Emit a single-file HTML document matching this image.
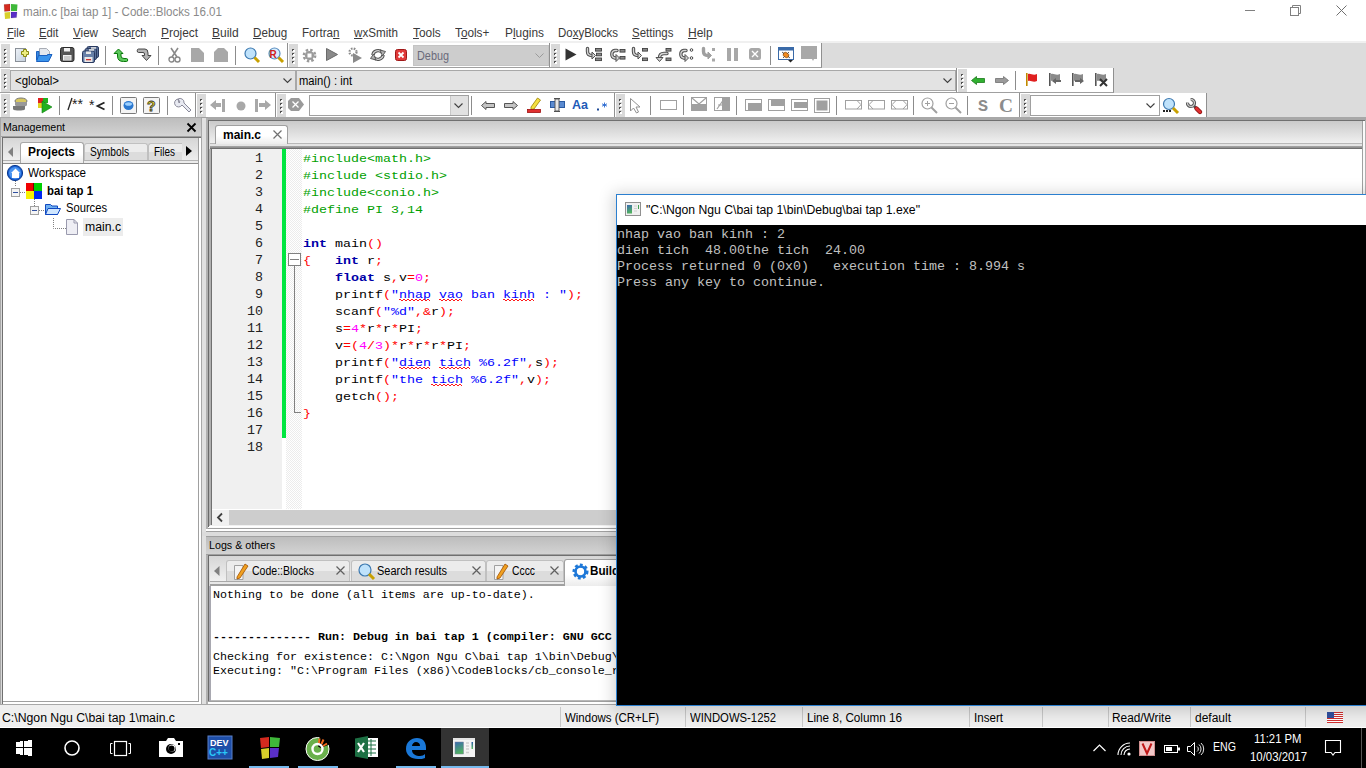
<!DOCTYPE html>
<html><head><meta charset="utf-8"><title>Code::Blocks</title>
<style>
*{margin:0;padding:0;box-sizing:border-box}
html,body{width:1366px;height:768px;overflow:hidden;background:#fff}
body{font-family:"Liberation Sans",sans-serif;font-size:12px;color:#000;position:relative}
.a{position:absolute}
.t{position:absolute;line-height:0;white-space:pre}
svg{overflow:visible}
</style></head><body>
<div class="a" style="left:0px;top:0px;width:1366px;height:22px;background:#fff"></div>
<svg class="a" style="left:3px;top:3px;" width="15" height="16" viewBox="0 0 15 16"><path d="M1 1.5L7 1V8L1.5 8.5Z" fill="#d42a1f"/><path d="M8 1L14.5 1.5L14 8H8Z" fill="#3fb83a"/><path d="M1.5 9.5L7 9V15.5L2 16Z" fill="#d8cf2a"/><path d="M8 9H14L13.5 14.5L8 15Z" fill="#5a2fc8"/><path d="M1 1.5L7 1V8L1.5 8.5Z M8 9H14L13.5 14.5L8 15Z" fill="none" stroke="#00000033" stroke-width="0.6"/></svg>
<div class="t" style="left:23px;top:11.84px;font-size:12px;color:#8a8a8a;transform:scale(0.9655,1.0000);transform-origin:0 4.16px;">main.c [bai tap 1] - Code::Blocks 16.01</div>
<div class="a" style="left:1245px;top:10px;width:10px;height:1px;background:#808080"></div>
<svg class="a" style="left:1290px;top:5px;" width="11" height="11" viewBox="0 0 11 11"><path d="M2.5 2.5V0.5H10.5V8.5H8.5" fill="none" stroke="#808080"/><rect x="0.5" y="2.5" width="8" height="8" fill="none" stroke="#808080"/></svg>
<svg class="a" style="left:1336px;top:5px;" width="11" height="11" viewBox="0 0 11 11"><path d="M0.5 0.5L10.5 10.5M10.5 0.5L0.5 10.5" stroke="#707070" stroke-width="1"/></svg>
<div class="a" style="left:0px;top:22px;width:1366px;height:19px;background:#fff"></div>
<div class="t" style="left:7px;top:32.84px;font-size:12px;color:#3a3a3a;transform:scale(0.9298,1.0000);transform-origin:0 4.16px;"><u>F</u>ile</div>
<div class="t" style="left:39px;top:32.84px;font-size:12px;color:#3a3a3a;transform:scale(0.9371,1.0000);transform-origin:0 4.16px;"><u>E</u>dit</div>
<div class="t" style="left:73px;top:32.84px;font-size:12px;color:#3a3a3a;transform:scale(0.9685,1.0000);transform-origin:0 4.16px;"><u>V</u>iew</div>
<div class="t" style="left:112px;top:32.84px;font-size:12px;color:#3a3a3a;transform:scale(0.9041,1.0000);transform-origin:0 4.16px;">Sea<u>r</u>ch</div>
<div class="t" style="left:161px;top:32.84px;font-size:12px;color:#3a3a3a;transform:scale(0.9904,1.0000);transform-origin:0 4.16px;"><u>P</u>roject</div>
<div class="t" style="left:212px;top:32.84px;font-size:12px;color:#3a3a3a;"><u>B</u>uild</div>
<div class="t" style="left:253px;top:32.84px;font-size:12px;color:#3a3a3a;transform:scale(0.9696,1.0000);transform-origin:0 4.16px;"><u>D</u>ebug</div>
<div class="t" style="left:302px;top:32.84px;font-size:12px;color:#3a3a3a;transform:scale(0.9689,1.0000);transform-origin:0 4.16px;">Fortra<u>n</u></div>
<div class="t" style="left:354px;top:32.84px;font-size:12px;color:#3a3a3a;transform:scale(0.9700,1.0000);transform-origin:0 4.16px;"><u>w</u>xSmith</div>
<div class="t" style="left:413px;top:32.84px;font-size:12px;color:#3a3a3a;transform:scale(0.9887,1.0000);transform-origin:0 4.16px;"><u>T</u>ools</div>
<div class="t" style="left:455px;top:32.84px;font-size:12px;color:#3a3a3a;transform:scale(0.9815,1.0000);transform-origin:0 4.16px;">T<u>o</u>ols+</div>
<div class="t" style="left:505px;top:32.84px;font-size:12px;color:#3a3a3a;transform:scale(0.9905,1.0000);transform-origin:0 4.16px;">P<u>l</u>ugins</div>
<div class="t" style="left:558px;top:32.84px;font-size:12px;color:#3a3a3a;transform:scale(0.9571,1.0000);transform-origin:0 4.16px;">Do<u>x</u>yBlocks</div>
<div class="t" style="left:632px;top:32.84px;font-size:12px;color:#3a3a3a;transform:scale(0.9545,1.0000);transform-origin:0 4.16px;"><u>S</u>ettings</div>
<div class="t" style="left:688px;top:32.84px;font-size:12px;color:#3a3a3a;"><u>H</u>elp</div>
<div class="a" style="left:0px;top:41px;width:1366px;height:2px;background:#f0f0f0"></div>
<div class="a" style="left:0px;top:43px;width:1366px;height:75px;background:#dcdcdc"></div>
<div class="a" style="left:0px;top:117px;width:1366px;height:1px;background:#a0a0a0"></div>
<div class="a" style="left:0px;top:43px;width:288px;height:25px;background:#fff;border-right:1px solid #909090;border-bottom:1px solid #a0a0a0"></div>
<div class="a" style="left:1px;top:44px;width:9px;height:23px;background:#d9d9d9"></div>
<svg class="a" style="left:1px;top:44px;" width="9" height="23" viewBox="0 0 9 23"><rect x="4" y="6" width="2" height="2" fill="#fff"/><rect x="3" y="5" width="2" height="1" fill="#505050"/><rect x="3" y="6" width="1" height="1" fill="#505050"/><rect x="4" y="10" width="2" height="2" fill="#fff"/><rect x="3" y="9" width="2" height="1" fill="#505050"/><rect x="3" y="10" width="1" height="1" fill="#505050"/><rect x="4" y="14" width="2" height="2" fill="#fff"/><rect x="3" y="13" width="2" height="1" fill="#505050"/><rect x="3" y="14" width="1" height="1" fill="#505050"/><rect x="4" y="18" width="2" height="2" fill="#fff"/><rect x="3" y="17" width="2" height="1" fill="#505050"/><rect x="3" y="18" width="1" height="1" fill="#505050"/></svg>
<div class="a" style="left:288px;top:43px;width:262px;height:25px;background:#fff;border-right:1px solid #909090;border-bottom:1px solid #a0a0a0"></div>
<div class="a" style="left:289px;top:44px;width:9px;height:23px;background:#d9d9d9"></div>
<svg class="a" style="left:289px;top:44px;" width="9" height="23" viewBox="0 0 9 23"><rect x="4" y="6" width="2" height="2" fill="#fff"/><rect x="3" y="5" width="2" height="1" fill="#505050"/><rect x="3" y="6" width="1" height="1" fill="#505050"/><rect x="4" y="10" width="2" height="2" fill="#fff"/><rect x="3" y="9" width="2" height="1" fill="#505050"/><rect x="3" y="10" width="1" height="1" fill="#505050"/><rect x="4" y="14" width="2" height="2" fill="#fff"/><rect x="3" y="13" width="2" height="1" fill="#505050"/><rect x="3" y="14" width="1" height="1" fill="#505050"/><rect x="4" y="18" width="2" height="2" fill="#fff"/><rect x="3" y="17" width="2" height="1" fill="#505050"/><rect x="3" y="18" width="1" height="1" fill="#505050"/></svg>
<div class="a" style="left:550px;top:43px;width:272px;height:25px;background:#fff;border-right:1px solid #909090;border-bottom:1px solid #a0a0a0"></div>
<div class="a" style="left:551px;top:44px;width:9px;height:23px;background:#d9d9d9"></div>
<svg class="a" style="left:551px;top:44px;" width="9" height="23" viewBox="0 0 9 23"><rect x="4" y="6" width="2" height="2" fill="#fff"/><rect x="3" y="5" width="2" height="1" fill="#505050"/><rect x="3" y="6" width="1" height="1" fill="#505050"/><rect x="4" y="10" width="2" height="2" fill="#fff"/><rect x="3" y="9" width="2" height="1" fill="#505050"/><rect x="3" y="10" width="1" height="1" fill="#505050"/><rect x="4" y="14" width="2" height="2" fill="#fff"/><rect x="3" y="13" width="2" height="1" fill="#505050"/><rect x="3" y="14" width="1" height="1" fill="#505050"/><rect x="4" y="18" width="2" height="2" fill="#fff"/><rect x="3" y="17" width="2" height="1" fill="#505050"/><rect x="3" y="18" width="1" height="1" fill="#505050"/></svg>
<div class="a" style="left:0px;top:68px;width:957px;height:25px;background:#fff;border-right:1px solid #909090;border-bottom:1px solid #a0a0a0"></div>
<div class="a" style="left:1px;top:69px;width:9px;height:23px;background:#d9d9d9"></div>
<svg class="a" style="left:1px;top:69px;" width="9" height="23" viewBox="0 0 9 23"><rect x="4" y="6" width="2" height="2" fill="#fff"/><rect x="3" y="5" width="2" height="1" fill="#505050"/><rect x="3" y="6" width="1" height="1" fill="#505050"/><rect x="4" y="10" width="2" height="2" fill="#fff"/><rect x="3" y="9" width="2" height="1" fill="#505050"/><rect x="3" y="10" width="1" height="1" fill="#505050"/><rect x="4" y="14" width="2" height="2" fill="#fff"/><rect x="3" y="13" width="2" height="1" fill="#505050"/><rect x="3" y="14" width="1" height="1" fill="#505050"/><rect x="4" y="18" width="2" height="2" fill="#fff"/><rect x="3" y="17" width="2" height="1" fill="#505050"/><rect x="3" y="18" width="1" height="1" fill="#505050"/></svg>
<div class="a" style="left:957px;top:68px;width:157px;height:25px;background:#fff;border-right:1px solid #909090;border-bottom:1px solid #a0a0a0"></div>
<div class="a" style="left:958px;top:69px;width:9px;height:23px;background:#d9d9d9"></div>
<svg class="a" style="left:958px;top:69px;" width="9" height="23" viewBox="0 0 9 23"><rect x="4" y="6" width="2" height="2" fill="#fff"/><rect x="3" y="5" width="2" height="1" fill="#505050"/><rect x="3" y="6" width="1" height="1" fill="#505050"/><rect x="4" y="10" width="2" height="2" fill="#fff"/><rect x="3" y="9" width="2" height="1" fill="#505050"/><rect x="3" y="10" width="1" height="1" fill="#505050"/><rect x="4" y="14" width="2" height="2" fill="#fff"/><rect x="3" y="13" width="2" height="1" fill="#505050"/><rect x="3" y="14" width="1" height="1" fill="#505050"/><rect x="4" y="18" width="2" height="2" fill="#fff"/><rect x="3" y="17" width="2" height="1" fill="#505050"/><rect x="3" y="18" width="1" height="1" fill="#505050"/></svg>
<div class="a" style="left:0px;top:93px;width:196px;height:25px;background:#fff;border-right:1px solid #909090;border-bottom:1px solid #a0a0a0"></div>
<div class="a" style="left:1px;top:94px;width:9px;height:23px;background:#d9d9d9"></div>
<svg class="a" style="left:1px;top:94px;" width="9" height="23" viewBox="0 0 9 23"><rect x="4" y="6" width="2" height="2" fill="#fff"/><rect x="3" y="5" width="2" height="1" fill="#505050"/><rect x="3" y="6" width="1" height="1" fill="#505050"/><rect x="4" y="10" width="2" height="2" fill="#fff"/><rect x="3" y="9" width="2" height="1" fill="#505050"/><rect x="3" y="10" width="1" height="1" fill="#505050"/><rect x="4" y="14" width="2" height="2" fill="#fff"/><rect x="3" y="13" width="2" height="1" fill="#505050"/><rect x="3" y="14" width="1" height="1" fill="#505050"/><rect x="4" y="18" width="2" height="2" fill="#fff"/><rect x="3" y="17" width="2" height="1" fill="#505050"/><rect x="3" y="18" width="1" height="1" fill="#505050"/></svg>
<div class="a" style="left:276px;top:93px;width:339px;height:25px;background:#fff;border-right:1px solid #909090;border-bottom:1px solid #a0a0a0"></div>
<div class="a" style="left:277px;top:94px;width:9px;height:23px;background:#d9d9d9"></div>
<svg class="a" style="left:277px;top:94px;" width="9" height="23" viewBox="0 0 9 23"><rect x="4" y="6" width="2" height="2" fill="#fff"/><rect x="3" y="5" width="2" height="1" fill="#505050"/><rect x="3" y="6" width="1" height="1" fill="#505050"/><rect x="4" y="10" width="2" height="2" fill="#fff"/><rect x="3" y="9" width="2" height="1" fill="#505050"/><rect x="3" y="10" width="1" height="1" fill="#505050"/><rect x="4" y="14" width="2" height="2" fill="#fff"/><rect x="3" y="13" width="2" height="1" fill="#505050"/><rect x="3" y="14" width="1" height="1" fill="#505050"/><rect x="4" y="18" width="2" height="2" fill="#fff"/><rect x="3" y="17" width="2" height="1" fill="#505050"/><rect x="3" y="18" width="1" height="1" fill="#505050"/></svg>
<div class="a" style="left:196px;top:93px;width:80px;height:25px;background:#fff;border-right:1px solid #909090;border-bottom:1px solid #a0a0a0"></div>
<div class="a" style="left:197px;top:94px;width:9px;height:23px;background:#d9d9d9"></div>
<svg class="a" style="left:197px;top:94px;" width="9" height="23" viewBox="0 0 9 23"><rect x="4" y="6" width="2" height="2" fill="#fff"/><rect x="3" y="5" width="2" height="1" fill="#505050"/><rect x="3" y="6" width="1" height="1" fill="#505050"/><rect x="4" y="10" width="2" height="2" fill="#fff"/><rect x="3" y="9" width="2" height="1" fill="#505050"/><rect x="3" y="10" width="1" height="1" fill="#505050"/><rect x="4" y="14" width="2" height="2" fill="#fff"/><rect x="3" y="13" width="2" height="1" fill="#505050"/><rect x="3" y="14" width="1" height="1" fill="#505050"/><rect x="4" y="18" width="2" height="2" fill="#fff"/><rect x="3" y="17" width="2" height="1" fill="#505050"/><rect x="3" y="18" width="1" height="1" fill="#505050"/></svg>
<div class="a" style="left:615px;top:93px;width:405px;height:25px;background:#fff;border-right:1px solid #909090;border-bottom:1px solid #a0a0a0"></div>
<div class="a" style="left:616px;top:94px;width:9px;height:23px;background:#d9d9d9"></div>
<svg class="a" style="left:616px;top:94px;" width="9" height="23" viewBox="0 0 9 23"><rect x="4" y="6" width="2" height="2" fill="#fff"/><rect x="3" y="5" width="2" height="1" fill="#505050"/><rect x="3" y="6" width="1" height="1" fill="#505050"/><rect x="4" y="10" width="2" height="2" fill="#fff"/><rect x="3" y="9" width="2" height="1" fill="#505050"/><rect x="3" y="10" width="1" height="1" fill="#505050"/><rect x="4" y="14" width="2" height="2" fill="#fff"/><rect x="3" y="13" width="2" height="1" fill="#505050"/><rect x="3" y="14" width="1" height="1" fill="#505050"/><rect x="4" y="18" width="2" height="2" fill="#fff"/><rect x="3" y="17" width="2" height="1" fill="#505050"/><rect x="3" y="18" width="1" height="1" fill="#505050"/></svg>
<div class="a" style="left:1020px;top:93px;width:187px;height:25px;background:#fff;border-right:1px solid #909090;border-bottom:1px solid #a0a0a0"></div>
<div class="a" style="left:1021px;top:94px;width:9px;height:23px;background:#d9d9d9"></div>
<svg class="a" style="left:1021px;top:94px;" width="9" height="23" viewBox="0 0 9 23"><rect x="4" y="6" width="2" height="2" fill="#fff"/><rect x="3" y="5" width="2" height="1" fill="#505050"/><rect x="3" y="6" width="1" height="1" fill="#505050"/><rect x="4" y="10" width="2" height="2" fill="#fff"/><rect x="3" y="9" width="2" height="1" fill="#505050"/><rect x="3" y="10" width="1" height="1" fill="#505050"/><rect x="4" y="14" width="2" height="2" fill="#fff"/><rect x="3" y="13" width="2" height="1" fill="#505050"/><rect x="3" y="14" width="1" height="1" fill="#505050"/><rect x="4" y="18" width="2" height="2" fill="#fff"/><rect x="3" y="17" width="2" height="1" fill="#505050"/><rect x="3" y="18" width="1" height="1" fill="#505050"/></svg>
<svg class="a" style="left:13px;top:47px;" width="17" height="16" viewBox="0 0 17 16"><defs><linearGradient id="gdoc" x1="0" y1="0" x2="1" y2="1"><stop offset="0" stop-color="#eef2f8"/><stop offset="1" stop-color="#c4d0dc"/></linearGradient></defs><rect x="2.5" y="1.5" width="10" height="13" fill="url(#gdoc)" stroke="#8a9098"/><path d="M10.5 2.5H13.5V4.5H15.5V7.5H13.5V9.5H10.5V7.5H8.5V4.5H10.5Z" fill="#eeee80" stroke="#8a8a10"/></svg>
<svg class="a" style="left:36px;top:47px;" width="17" height="16" viewBox="0 0 17 16"><path d="M3.5 1.5H10.5L13.5 4.5V12H3.5Z" fill="#e4e8ee" stroke="#a8acb4"/><path d="M0.5 4.5H3V13H0.5Z" fill="#3a8ae0" stroke="#1a60c0"/><path d="M2.5 8.5H11.5V7.5H16L12.5 14.5H0.5Z" fill="#3a94ec" stroke="#1a60c0"/></svg>
<svg class="a" style="left:60px;top:47px;" width="15" height="15" viewBox="0 0 15 15"><rect x="0.5" y="0.5" width="13.5" height="14" rx="2" fill="#555" stroke="#2a2a2a"/><rect x="4" y="1" width="6" height="3.5" fill="#f0f0f0"/><rect x="3" y="8" width="8.5" height="5.5" fill="#f0f0f0"/><path d="M4 10H10.5M4 12H10.5" stroke="#888" stroke-width="0.7"/></svg>
<svg class="a" style="left:82px;top:46px;" width="17" height="17" viewBox="0 0 17 17"><rect x="5" y="0.5" width="11.5" height="11" rx="1.5" fill="#5a7098" stroke="#2a3a60"/><rect x="3" y="2.5" width="11.5" height="11" rx="1.5" fill="#5a7098" stroke="#2a3a60"/><rect x="0.5" y="5" width="12" height="11.5" rx="1.5" fill="#6880a8" stroke="#2a3a60"/><rect x="9" y="1.2" width="5" height="1.5" fill="#e8e8e8"/><rect x="7" y="3.2" width="5" height="1.5" fill="#e8e8e8"/><rect x="4" y="5.5" width="5" height="2.5" fill="#e8e8e8"/><rect x="2.5" y="11" width="8" height="5" fill="#e8e8e8"/><rect x="4" y="13" width="5" height="1.3" fill="#d03030"/></svg>
<div class="a" style="left:105px;top:46px;width:1px;height:19px;background:#8c8c8c"></div>
<svg class="a" style="left:112px;top:47px;" width="17" height="16" viewBox="0 0 17 16"><path d="M6.5 2L11 6.5H9V9Q9 11.5 12 11.5H14.5Q15.7 11.5 15.7 13Q15.7 14.5 14.5 14.5H11.5Q5.5 14.5 5.5 9V6.5H2Z" fill="#5cc85c" stroke="#0a7a0a" stroke-width="1" stroke-linejoin="round"/></svg>
<svg class="a" style="left:137px;top:47px;" width="16" height="16" viewBox="0 0 16 16"><path d="M1.5 2H8Q11 2 11 6V8.5H14L9.5 13.5L5 8.5H7.5V7Q7.5 5.5 6 5.5H1.5Q0.2 5.5 0.2 3.75Q0.2 2 1.5 2Z" fill="#b4b4b4" stroke="#383838" stroke-width="0.9" stroke-linejoin="round"/></svg>
<div class="a" style="left:158px;top:46px;width:1px;height:19px;background:#8c8c8c"></div>
<svg class="a" style="left:168px;top:47px;" width="13" height="16" viewBox="0 0 13 16"><path d="M3 1L9 10M10 1L4 10" stroke="#8a8a8a" stroke-width="1.6"/><circle cx="3.5" cy="12.5" r="2.5" fill="none" stroke="#8a8a8a" stroke-width="1.4"/><circle cx="9.5" cy="12.5" r="2.5" fill="none" stroke="#8a8a8a" stroke-width="1.4"/></svg>
<svg class="a" style="left:191px;top:48px;" width="14" height="14" viewBox="0 0 14 14"><path d="M0 0H8L13 5V14H0Z" fill="#a8a8a8"/></svg>
<svg class="a" style="left:214px;top:48px;" width="14" height="14" viewBox="0 0 14 14"><path d="M0 4L4 0H10L14 4V14H0Z" fill="#a8a8a8"/></svg>
<div class="a" style="left:235px;top:46px;width:1px;height:19px;background:#8c8c8c"></div>
<svg class="a" style="left:244px;top:47px;" width="16" height="16" viewBox="0 0 16 16"><circle cx="6.5" cy="6.5" r="5.5" fill="#bfe2fb" stroke="#3d79b0" stroke-width="1.2"/><path d="M10.5 10.5L15 15" stroke="#c8a000" stroke-width="3"/></svg>
<svg class="a" style="left:268px;top:47px;" width="16" height="16" viewBox="0 0 16 16"><circle cx="6.5" cy="6.5" r="5.5" fill="#d8eefc" stroke="#5a8dc0" stroke-width="1.2"/><text x="1.5" y="11" font-family="Liberation Sans" font-weight="bold" font-size="10" fill="#d02020">R</text><path d="M10.5 10.5L15 15" stroke="#c8a000" stroke-width="3"/></svg>
<svg class="a" style="left:302px;top:48px;" width="15" height="15" viewBox="0 0 15 15"><circle cx="7.5" cy="7.5" r="5.6" fill="none" stroke="#9a9a9a" stroke-width="2.6" stroke-dasharray="2.4 2"/><circle cx="7.5" cy="7.5" r="4.6" fill="#9a9a9a"/><rect x="5.5" y="5.5" width="4" height="4" fill="#fff"/></svg>
<svg class="a" style="left:326px;top:48px;" width="12" height="13" viewBox="0 0 12 13"><path d="M0.5 0.5L11.5 6.5L0.5 12.5Z" fill="#8a8a8a" stroke="#6a6a6a"/></svg>
<svg class="a" style="left:348px;top:47px;" width="15" height="16" viewBox="0 0 15 16"><circle cx="5" cy="5" r="3.5" fill="none" stroke="#8a8a8a" stroke-width="2.2" stroke-dasharray="1.6 1.2"/><path d="M5 6L14 11L5 16Z" fill="#8a8a8a"/></svg>
<svg class="a" style="left:370px;top:48px;" width="16" height="14" viewBox="0 0 16 14"><path d="M3 7A5 4.5 0 0 1 12 4.5" fill="none" stroke="#505050" stroke-width="3.4"/><path d="M3 7A5 4.5 0 0 1 12 4.5" fill="none" stroke="#d0d0d0" stroke-width="1.3"/><path d="M13 7A5 4.5 0 0 1 4 9.5" fill="none" stroke="#505050" stroke-width="3.4"/><path d="M13 7A5 4.5 0 0 1 4 9.5" fill="none" stroke="#d0d0d0" stroke-width="1.3"/><path d="M10 2L15.5 3.5L12.5 8Z M6 12L0.5 10.5L3.5 6Z" fill="#b0b0b0" stroke="#505050" stroke-width="0.9"/></svg>
<svg class="a" style="left:395px;top:49px;" width="12" height="12" viewBox="0 0 12 12"><rect x="0.5" y="0.5" width="11" height="11" rx="2" fill="#e03a3a" stroke="#a01818"/><path d="M3.5 3.5L8.5 8.5M8.5 3.5L3.5 8.5" stroke="#fff" stroke-width="1.8"/></svg>
<div class="a" style="left:413px;top:45px;width:136px;height:21px;background:#cdcdcd;border:1px solid #c4c4c4"></div>
<div class="t" style="left:417px;top:55.84px;font-size:12px;color:#6a6a7a;transform:scale(0.9046,1.0000);transform-origin:0 4.16px;">Debug</div>
<svg class="a" style="left:535px;top:53px;" width="9" height="5" viewBox="0 0 9 5"><path d="M0.5 0.5L4.5 4.5L8.5 0.5" fill="none" stroke="#9a9a9a"/></svg>
<svg class="a" style="left:565px;top:48px;" width="12" height="13" viewBox="0 0 12 13"><path d="M0.5 0.5L11.5 6.5L0.5 12.5Z" fill="#333"/></svg>
<svg class="a" style="left:586px;top:47px;" width="17" height="16" viewBox="0 0 17 16"><path d="M1.5 1.5V4.5Q1.5 8.5 6 8.5" fill="none" stroke="#505050" stroke-width="3.4" stroke-linecap="round"/><path d="M1.5 1.5V4.5Q1.5 8.5 6 8.5" fill="none" stroke="#d4d4d4" stroke-width="1.3" stroke-linecap="round"/><path d="M6 5L9.5 8.5L6 12Z" fill="#d4d4d4" stroke="#505050" stroke-width="1" stroke-linejoin="round"/><rect x="9.5" y="1.5" width="6" height="2.6" fill="#8a8a8a" stroke="#404040" stroke-width="0.9"/><rect x="10.5" y="6.2" width="5" height="2.6" fill="#8a8a8a" stroke="#404040" stroke-width="0.9"/><rect x="9.5" y="11" width="6" height="2.6" fill="#8a8a8a" stroke="#404040" stroke-width="0.9"/></svg>
<svg class="a" style="left:609px;top:47px;" width="17" height="16" viewBox="0 0 17 16"><path d="M8 3.5H6A3.8 3.8 0 0 0 6 11H7" fill="none" stroke="#505050" stroke-width="3.4" stroke-linecap="round"/><path d="M8 3.5H6A3.8 3.8 0 0 0 6 11H7" fill="none" stroke="#d4d4d4" stroke-width="1.3" stroke-linecap="round"/><path d="M7 7.5L10.5 11L7 14.5Z" fill="#d4d4d4" stroke="#505050" stroke-width="1" stroke-linejoin="round"/><rect x="11" y="2.5" width="5" height="2.6" fill="#8a8a8a" stroke="#404040" stroke-width="0.9"/><rect x="11" y="9.5" width="5" height="2.6" fill="#8a8a8a" stroke="#404040" stroke-width="0.9"/></svg>
<svg class="a" style="left:632px;top:47px;" width="17" height="16" viewBox="0 0 17 16"><path d="M1.5 1.5V4.5Q1.5 8.5 6 8.5" fill="none" stroke="#505050" stroke-width="3.4" stroke-linecap="round"/><path d="M1.5 1.5V4.5Q1.5 8.5 6 8.5" fill="none" stroke="#d4d4d4" stroke-width="1.3" stroke-linecap="round"/><path d="M6 5L9.5 8.5L6 12Z" fill="#d4d4d4" stroke="#505050" stroke-width="1" stroke-linejoin="round"/><rect x="10.5" y="1.5" width="5" height="2.6" fill="#8a8a8a" stroke="#404040" stroke-width="0.9"/><rect x="10.5" y="11" width="5" height="2.6" fill="#8a8a8a" stroke="#404040" stroke-width="0.9"/></svg>
<svg class="a" style="left:655px;top:47px;" width="17" height="16" viewBox="0 0 17 16"><path d="M12 6.5H9Q4.5 6.5 4.5 11" fill="none" stroke="#505050" stroke-width="3.4" stroke-linecap="round"/><path d="M12 6.5H9Q4.5 6.5 4.5 11" fill="none" stroke="#d4d4d4" stroke-width="1.3" stroke-linecap="round"/><path d="M1 10.5H8L4.5 14.5Z" fill="#d4d4d4" stroke="#505050" stroke-width="1" stroke-linejoin="round"/><rect x="11" y="1.5" width="5" height="2.6" fill="#8a8a8a" stroke="#404040" stroke-width="0.9"/><rect x="11" y="11" width="5" height="2.6" fill="#8a8a8a" stroke="#404040" stroke-width="0.9"/></svg>
<svg class="a" style="left:678px;top:47px;" width="17" height="16" viewBox="0 0 17 16"><path d="M8 3.5H6A3.8 3.8 0 0 0 6 11H7" fill="none" stroke="#505050" stroke-width="3.4" stroke-linecap="round"/><path d="M8 3.5H6A3.8 3.8 0 0 0 6 11H7" fill="none" stroke="#d4d4d4" stroke-width="1.3" stroke-linecap="round"/><path d="M7 7.5L10.5 11L7 14.5Z" fill="#d4d4d4" stroke="#505050" stroke-width="1" stroke-linejoin="round"/><circle cx="13.5" cy="3" r="1.3" fill="#fff" stroke="#333" stroke-width="0.9"/><circle cx="13.5" cy="11" r="1.3" fill="#fff" stroke="#333" stroke-width="0.9"/></svg>
<svg class="a" style="left:702px;top:47px;" width="17" height="16" viewBox="0 0 17 16"><path d="M1.5 1.5V4.5Q1.5 8.5 6 8.5" fill="none" stroke="#a0a0a0" stroke-width="3.4" stroke-linecap="round"/><path d="M1.5 1.5V4.5Q1.5 8.5 6 8.5" fill="none" stroke="#a0a0a0" stroke-width="1.3" stroke-linecap="round"/><path d="M6 5L9.5 8.5L6 12Z" fill="#a0a0a0" stroke="#a0a0a0" stroke-width="1" stroke-linejoin="round"/><rect x="10" y="1" width="3" height="3" fill="#a8a8a8"/><rect x="10" y="11.5" width="3" height="3" fill="#a8a8a8"/></svg>
<svg class="a" style="left:727px;top:48px;" width="11" height="13" viewBox="0 0 11 13"><rect x="0" y="0" width="4" height="13" fill="#a8a8a8"/><rect x="7" y="0" width="4" height="13" fill="#a8a8a8"/></svg>
<svg class="a" style="left:749px;top:48px;" width="12" height="12" viewBox="0 0 12 12"><rect x="0" y="0" width="12" height="12" rx="2.5" fill="#a8a8a8"/><path d="M3 3L9 9M9 3L3 9" stroke="#fff" stroke-width="1.4"/></svg>
<div class="a" style="left:770px;top:46px;width:1px;height:19px;background:#8c8c8c"></div>
<svg class="a" style="left:778px;top:47px;" width="17" height="16" viewBox="0 0 17 16"><rect x="0.5" y="0.5" width="15" height="12" fill="#fff" stroke="#3a6aa8"/><rect x="1" y="1" width="14" height="2.5" fill="#3a6aa8"/><ellipse cx="8" cy="8" rx="3" ry="2.4" fill="#f08a20" stroke="#804000" stroke-width="0.6" transform="rotate(35 8 8)"/><path d="M4 5L6 6.5M12 11L10 9.5M5 11L6.5 9.5M11 5L9.5 6.5" stroke="#333" stroke-width="0.8"/><path d="M10 13H15L12.5 15.5Z" fill="#222"/></svg>
<svg class="a" style="left:801px;top:46px;" width="16" height="16" viewBox="0 0 16 16"><path d="M0 0H16V13H13L12 15L11 13H0Z" fill="#a8a8a8"/></svg>
<div class="a" style="left:10px;top:70px;width:286px;height:21px;background:#e3e3e3;border:1px solid #a8a8a8"></div>
<div class="t" style="left:15px;top:80.84px;font-size:12px;color:#000;transform:scale(0.9555,1.0000);transform-origin:0 4.16px;">&lt;global&gt;</div>
<svg class="a" style="left:283px;top:78px;" width="9" height="5" viewBox="0 0 9 5"><path d="M0.5 0.5L4.5 4.5L8.5 0.5" fill="none" stroke="#404040" stroke-width="1.1"/></svg>
<div class="a" style="left:296px;top:70px;width:660px;height:21px;background:#e3e3e3;border:1px solid #a8a8a8"></div>
<div class="t" style="left:299px;top:80.84px;font-size:12px;color:#000;transform:scale(0.9350,1.0000);transform-origin:0 4.16px;">main() : int</div>
<svg class="a" style="left:943px;top:78px;" width="9" height="5" viewBox="0 0 9 5"><path d="M0.5 0.5L4.5 4.5L8.5 0.5" fill="none" stroke="#404040" stroke-width="1.1"/></svg>
<svg class="a" style="left:971px;top:76px;" width="14" height="9" viewBox="0 0 14 9"><path d="M0.5 4.5L5.5 0.5V2.5H13.5V6.5H5.5V8.5Z" fill="#30b030" stroke="#1a7a1a" stroke-width="0.8"/></svg>
<svg class="a" style="left:995px;top:76px;" width="14" height="9" viewBox="0 0 14 9"><path d="M13.5 4.5L8.5 0.5V2.5H0.5V6.5H8.5V8.5Z" fill="#9a9a9a" stroke="#707070" stroke-width="0.8"/></svg>
<div class="a" style="left:1015px;top:71px;width:1px;height:19px;background:#8c8c8c"></div>
<svg class="a" style="left:1026px;top:73px;" width="12" height="13" viewBox="0 0 12 13"><rect x="0" y="0" width="1.6" height="13" fill="#c08a00"/><path d="M2 1C5 0 7 3 11 1V8C7 10 5 7 2 8Z" fill="#e02020"/></svg>
<svg class="a" style="left:1049px;top:73px;" width="13" height="14" viewBox="0 0 13 14"><rect x="0" y="0" width="1.6" height="13" fill="#555"/><path d="M2 1C5 0 7 3 11 1V8C7 10 5 7 2 8Z" fill="#8a8a8a"/><path d="M3 8L7 5V7H12V9H7V11Z" fill="#666"/></svg>
<svg class="a" style="left:1072px;top:73px;" width="13" height="14" viewBox="0 0 13 14"><rect x="0" y="0" width="1.6" height="13" fill="#555"/><path d="M2 1C5 0 7 3 11 1V8C7 10 5 7 2 8Z" fill="#8a8a8a"/><path d="M12 8L8 5V7H3V9H8V11Z" fill="#666"/></svg>
<svg class="a" style="left:1095px;top:73px;" width="13" height="14" viewBox="0 0 13 14"><rect x="0" y="0" width="1.6" height="13" fill="#555"/><path d="M2 1C5 0 7 3 11 1V8C7 10 5 7 2 8Z" fill="#8a8a8a"/><path d="M5 6L12 13M12 6L5 13" stroke="#333" stroke-width="2"/></svg>
<svg class="a" style="left:12px;top:97px;" width="17" height="16" viewBox="0 0 17 16"><ellipse cx="9" cy="4" rx="6" ry="3" fill="#d8c860" stroke="#777"/><path d="M3 5V8C3 10 15 10 15 8V5" fill="#999"/><path d="M1 9V12C1 14 13 14 13 12V9" fill="#777"/></svg>
<svg class="a" style="left:37px;top:97px;" width="16" height="16" viewBox="0 0 16 16"><rect x="1" y="1" width="5" height="5" fill="#e02020"/><rect x="6" y="1" width="5" height="5" fill="#20b020"/><rect x="1" y="6" width="5" height="5" fill="#e0d020"/><path d="M5 4L15 10L5 16Z" fill="#20b020" stroke="#108010" stroke-width="0.6"/></svg>
<div class="a" style="left:59px;top:96px;width:1px;height:19px;background:#8c8c8c"></div>
<svg class="a" style="left:66px;top:97px;" width="40" height="16" viewBox="0 0 40 16"><path d="M6 1L2 13" stroke="#222" stroke-width="1.3"/><text x="6" y="12" font-family="Liberation Sans" font-size="14" fill="#222">**</text><text x="23" y="13" font-family="Liberation Sans" font-size="14" fill="#222">*</text><path d="M38.5 5.5L31.5 9L38.5 12.5" fill="none" stroke="#222" stroke-width="1.8"/></svg>
<div class="a" style="left:112px;top:96px;width:1px;height:19px;background:#8c8c8c"></div>
<svg class="a" style="left:120px;top:97px;" width="17" height="17" viewBox="0 0 17 17"><rect x="0.5" y="0.5" width="16" height="16" rx="1" fill="#f4f4f4" stroke="#7a7a7a"/><ellipse cx="8.5" cy="8.5" rx="5" ry="4.5" fill="#2a78d0"/><ellipse cx="8.5" cy="7" rx="3.5" ry="1.8" fill="#9cd0ff"/></svg>
<svg class="a" style="left:143px;top:97px;" width="17" height="17" viewBox="0 0 17 17"><rect x="0.5" y="0.5" width="16" height="16" rx="1" fill="#f4f4f4" stroke="#7a7a7a"/><text x="4" y="14" font-family="Liberation Sans" font-weight="bold" font-size="14" fill="#f0e020" stroke="#333" stroke-width="0.8">?</text></svg>
<div class="a" style="left:167px;top:96px;width:1px;height:19px;background:#8c8c8c"></div>
<svg class="a" style="left:175px;top:97px;" width="17" height="17" viewBox="0 0 17 17"><path d="M3 2A4 4 0 1 0 7 8L14 15L16 13L9 6A4 4 0 0 0 3 2L5 5L4 6Z" fill="#e8eaf2" stroke="#8a8a9a" stroke-width="1"/></svg>
<svg class="a" style="left:209px;top:98px;" width="17" height="15" viewBox="0 0 17 15"><path d="M1 7L7 2V5H12V9H7V12Z" fill="#a8a8a8"/><rect x="13" y="1" width="3" height="13" fill="#a8a8a8"/></svg>
<svg class="a" style="left:236px;top:101px;" width="10" height="10" viewBox="0 0 10 10"><circle cx="5" cy="5" r="4.5" fill="#a8a8a8"/></svg>
<svg class="a" style="left:255px;top:98px;" width="17" height="15" viewBox="0 0 17 15"><rect x="0" y="1" width="3" height="13" fill="#a8a8a8"/><path d="M16 7L10 2V5H4V9H10V12Z" fill="#a8a8a8"/></svg>
<svg class="a" style="left:288px;top:98px;" width="17" height="13" viewBox="0 0 17 13"><path d="M0 3L3 0H11L16 6.5L11 13H3L0 10Z" fill="#9a9a9a"/><path d="M4.5 3.5L10.5 9.5M10.5 3.5L4.5 9.5" stroke="#fff" stroke-width="1.3"/></svg>
<div class="a" style="left:309px;top:95px;width:160px;height:21px;background:#fff;border:1px solid #a0a0a0"></div>
<div class="a" style="left:450px;top:96px;width:18px;height:19px;background:#e1e1e1;border-left:1px solid #c8c8c8"></div>
<svg class="a" style="left:454px;top:103px;" width="9" height="5" viewBox="0 0 9 5"><path d="M0.5 0.5L4.5 4.5L8.5 0.5" fill="none" stroke="#404040" stroke-width="1.1"/></svg>
<div class="a" style="left:471px;top:96px;width:1px;height:19px;background:#8c8c8c"></div>
<svg class="a" style="left:481px;top:101px;" width="14" height="9" viewBox="0 0 14 9"><path d="M0.5 4.5L5 0.5V2.5H13.5V6.5H5V8.5Z" fill="#c4c4c4" stroke="#555" stroke-linejoin="round"/></svg>
<svg class="a" style="left:504px;top:101px;" width="14" height="9" viewBox="0 0 14 9"><path d="M13.5 4.5L9 0.5V2.5H0.5V6.5H9V8.5Z" fill="#c4c4c4" stroke="#555" stroke-linejoin="round"/></svg>
<svg class="a" style="left:527px;top:97px;" width="15" height="16" viewBox="0 0 15 16"><path d="M4 10L10.5 1L13.5 3L7 12L4 12.5Z" fill="#f4e040" stroke="#9a8000" stroke-width="0.8"/><rect x="0.5" y="12.5" width="13" height="3" fill="#e03030" stroke="#a01010" stroke-width="0.8"/></svg>
<svg class="a" style="left:550px;top:98px;" width="15" height="14" viewBox="0 0 15 14"><rect x="0.5" y="3.5" width="14" height="6" fill="#5a8ad0" stroke="#2a5aa0"/><rect x="5" y="1" width="4" height="12" fill="#e8e8e8" stroke="#505050" stroke-width="0.9"/><path d="M4 0.5H10M4 13.5H10" stroke="#505050"/></svg>
<div class="t" style="left:572px;top:105.49px;font-size:13px;color:#1e5ab8;font-weight:700;transform:scale(0.9624,1.0000);transform-origin:0 4.51px;">Aa</div>
<svg class="a" style="left:596px;top:102px;" width="12" height="9" viewBox="0 0 12 9"><rect x="1" y="6.5" width="2" height="2" fill="#1e4a98"/><path d="M8.5 0.5V5.5M6 1.8L11 4.2M11 1.8L6 4.2" stroke="#2a6ad0" stroke-width="0.9"/></svg>
<svg class="a" style="left:629px;top:97px;" width="13" height="17" viewBox="0 0 13 17"><path d="M1.5 1.5V14L4.5 11L7.5 16L9.5 15L7 10H11Z" fill="#fff" stroke="#909090"/></svg>
<div class="a" style="left:650px;top:96px;width:1px;height:19px;background:#8c8c8c"></div>
<svg class="a" style="left:660px;top:100px;" width="17" height="10" viewBox="0 0 17 10"><rect x="0.5" y="0.5" width="16" height="9" fill="none" stroke="#a0a0a0"/></svg>
<div class="a" style="left:683px;top:96px;width:1px;height:19px;background:#8c8c8c"></div>
<svg class="a" style="left:691px;top:97px;" width="16" height="14" viewBox="0 0 16 14"><rect x="0" y="0" width="16" height="14" fill="#a0a0a0"/><rect x="1" y="1" width="14" height="6" fill="#fff"/><path d="M1 1L8 7L15 1" fill="none" stroke="#a0a0a0" stroke-width="1.2"/></svg>
<svg class="a" style="left:714px;top:97px;" width="16" height="14" viewBox="0 0 16 14"><rect x="0.5" y="0.5" width="15" height="13" fill="#fff" stroke="#a0a0a0"/><rect x="8" y="1" width="7" height="12" fill="#a0a0a0"/><path d="M3 12L10 2" stroke="#a0a0a0" stroke-width="1.2"/><path d="M4 8H12" stroke="#a0a0a0"/></svg>
<div class="a" style="left:736px;top:96px;width:1px;height:19px;background:#8c8c8c"></div>
<svg class="a" style="left:745px;top:99px;" width="17" height="12" viewBox="0 0 17 12"><rect x="0.5" y="0.5" width="16" height="11" fill="#fff" stroke="#a0a0a0"/><rect x="3" y="4" width="13" height="7" fill="#a0a0a0"/></svg>
<svg class="a" style="left:768px;top:99px;" width="17" height="12" viewBox="0 0 17 12"><rect x="0.5" y="0.5" width="16" height="11" fill="#fff" stroke="#a0a0a0"/><rect x="3" y="1" width="13" height="6" fill="#a0a0a0"/></svg>
<svg class="a" style="left:791px;top:99px;" width="17" height="12" viewBox="0 0 17 12"><rect x="0.5" y="0.5" width="16" height="11" fill="#fff" stroke="#a0a0a0"/><rect x="3" y="3" width="13" height="6" fill="#a0a0a0"/></svg>
<svg class="a" style="left:814px;top:99px;" width="17" height="12" viewBox="0 0 17 12"><rect x="0.5" y="-0.5" width="15" height="14" fill="#fff" stroke="#a0a0a0"/><rect x="2.5" y="1.5" width="11" height="10" fill="#a0a0a0"/></svg>
<div class="a" style="left:836px;top:96px;width:1px;height:19px;background:#8c8c8c"></div>
<svg class="a" style="left:845px;top:100px;" width="17" height="10" viewBox="0 0 17 10"><rect x="0.5" y="0.5" width="16" height="8.5" fill="none" stroke="#a0a0a0"/><path d="M12 0.5L16 4.7L12 9" fill="none" stroke="#a0a0a0"/></svg>
<svg class="a" style="left:868px;top:100px;" width="17" height="10" viewBox="0 0 17 10"><rect x="0.5" y="0.5" width="16" height="8.5" fill="none" stroke="#a0a0a0"/><path d="M5 0.5L1 4.7L5 9" fill="none" stroke="#a0a0a0"/></svg>
<svg class="a" style="left:891px;top:100px;" width="17" height="10" viewBox="0 0 17 10"><rect x="0.5" y="0.5" width="16" height="8.5" fill="none" stroke="#a0a0a0"/><path d="M12 0.5L16 4.7L12 9M5 0.5L1 4.7L5 9" fill="none" stroke="#a0a0a0"/></svg>
<div class="a" style="left:913px;top:96px;width:1px;height:19px;background:#8c8c8c"></div>
<svg class="a" style="left:921px;top:97px;" width="17" height="17" viewBox="0 0 17 17"><circle cx="6.5" cy="6.5" r="5.5" fill="none" stroke="#a0a0a0" stroke-width="1.2"/><path d="M4 6.5H9M6.5 4V9" stroke="#a0a0a0"/><path d="M10.5 10.5L16 16" stroke="#a0a0a0" stroke-width="2"/></svg>
<svg class="a" style="left:945px;top:97px;" width="17" height="17" viewBox="0 0 17 17"><circle cx="6.5" cy="6.5" r="5.5" fill="none" stroke="#a0a0a0" stroke-width="1.2"/><path d="M4 6.5H9" stroke="#a0a0a0"/><path d="M10.5 10.5L16 16" stroke="#a0a0a0" stroke-width="2"/></svg>
<div class="a" style="left:967px;top:96px;width:1px;height:19px;background:#8c8c8c"></div>
<div class="t" style="left:978px;top:106.74px;font-size:16px;color:#8c8c8c;font-weight:700;font-family:'Liberation Mono',monospace;transform:scale(1.0407,1.0500);transform-origin:0 4.26px;">S</div>
<div class="t" style="left:999px;top:105.93px;font-size:18px;color:#8c8c8c;font-weight:700;font-family:'Liberation Serif',serif;transform:scale(1.0769,1.0000);transform-origin:0 6.07px;">C</div>
<div class="a" style="left:1030px;top:95px;width:130px;height:21px;background:#fff;border:1px solid #a0a0a0"></div>
<svg class="a" style="left:1146px;top:103px;" width="9" height="5" viewBox="0 0 9 5"><path d="M0.5 0.5L4.5 4.5L8.5 0.5" fill="none" stroke="#404040" stroke-width="1.1"/></svg>
<svg class="a" style="left:1162px;top:97px;" width="18" height="17" viewBox="0 0 18 17"><circle cx="7" cy="7" r="5.5" fill="#bfe2fb" stroke="#3d79b0" stroke-width="1.2"/><path d="M11 11L16 16" stroke="#c8a000" stroke-width="3"/><rect x="1" y="13" width="2" height="2" fill="#222"/><rect x="4" y="13" width="2" height="2" fill="#222"/><rect x="7" y="13" width="2" height="2" fill="#222"/></svg>
<svg class="a" style="left:1185px;top:97px;" width="18" height="17" viewBox="0 0 18 17"><path d="M8.5 8.5L11 11" stroke="#505050" stroke-width="2.6"/><path d="M11.5 11.5L15 15" stroke="#8a1010" stroke-width="4.4" stroke-linecap="round"/><path d="M11.5 11.5L15 15" stroke="#e03030" stroke-width="2.8" stroke-linecap="round"/><path d="M5.7 2.5A3.5 3.5 0 1 1 2.5 5.7" fill="none" stroke="#505050" stroke-width="3.2"/><path d="M5.7 2.5A3.5 3.5 0 1 1 2.5 5.7" fill="none" stroke="#c8c8c8" stroke-width="1.3"/></svg>
<div class="a" style="left:0px;top:118px;width:201px;height:587px;background:#d9d9d9"></div>
<div class="a" style="left:0px;top:117px;width:201px;height:1px;background:#a8a8a8"></div>
<div class="a" style="left:0px;top:118px;width:201px;height:18px;background:linear-gradient(#bdbdbd,#d3d3d3)"></div>
<div class="a" style="left:0px;top:136px;width:201px;height:1px;background:#a0a0a0"></div>
<div class="a" style="left:0px;top:118px;width:1px;height:587px;background:#a8a8a8"></div>
<div class="t" style="left:3px;top:127.19px;font-size:11px;color:#000;transform:scale(0.9655,1.0000);transform-origin:0 3.81px;">Management</div>
<svg class="a" style="left:187px;top:123px;" width="9" height="9" viewBox="0 0 9 9"><path d="M0.5 0.5L8.5 8.5M8.5 0.5L0.5 8.5" stroke="#000" stroke-width="1.8"/></svg>
<div class="a" style="left:2px;top:137px;width:199px;height:568px;background:#fff;border-left:1px solid #707070;border-top:1px solid #707070"></div>
<div class="a" style="left:0px;top:704px;width:202px;height:1px;background:#a8a8a8"></div>
<div class="a" style="left:3px;top:138px;width:196px;height:22px;background:linear-gradient(#d6d6d6,#eeeeee)"></div>
<div class="a" style="left:3px;top:160px;width:196px;height:1px;background:#b4b4b4"></div>
<div class="a" style="left:3px;top:161px;width:196px;height:2px;background:#ececec"></div>
<div class="a" style="left:3px;top:163px;width:196px;height:1px;background:#8c8c8c"></div>
<div class="a" style="left:198px;top:138px;width:1px;height:564px;background:#a0a0a0"></div>
<div class="a" style="left:3px;top:701px;width:196px;height:1px;background:#a0a0a0"></div>
<div class="a" style="left:84px;top:143px;width:64px;height:17px;background:linear-gradient(#ececec 0,#ececec 50%,#dcdcdc 50%,#dcdcdc 100%);border:1px solid #c0c0c0;border-bottom:none;border-radius:3px 3px 0 0"></div>
<div class="a" style="left:148px;top:143px;width:34px;height:17px;background:linear-gradient(#ececec 0,#ececec 50%,#dcdcdc 50%,#dcdcdc 100%);border:1px solid #c0c0c0;border-bottom:none;border-right:none;border-radius:3px 0 0 0"></div>
<div class="a" style="left:20px;top:142px;width:64px;height:21px;background:linear-gradient(#fff,#fff 55%,#ececec);border:1px solid #a8a8a8;border-bottom:none;border-radius:3px 3px 0 0"></div>
<svg class="a" style="left:8px;top:147px;" width="5" height="10" viewBox="0 0 5 10"><path d="M5 0V10L0 5Z" fill="#808080"/></svg>
<svg class="a" style="left:186px;top:146px;" width="7" height="11" viewBox="0 0 7 11"><path d="M0 0V10L6 5Z" fill="#000"/></svg>
<div class="t" style="left:28px;top:151.84px;font-size:12px;color:#000;font-weight:700;transform:scale(0.9924,1.0000);transform-origin:0 4.16px;">Projects</div>
<div class="t" style="left:90px;top:151.84px;font-size:12px;color:#000;transform:scale(0.8475,1.0000);transform-origin:0 4.16px;">Symbols</div>
<div class="t" style="left:154px;top:151.84px;font-size:12px;color:#000;transform:scale(0.8286,1.0000);transform-origin:0 4.16px;">Files</div>
<svg class="a" style="left:7px;top:165px;" width="17" height="17" viewBox="0 0 17 17"><circle cx="8" cy="8" r="7.6" fill="#1a5fd0" stroke="#0a3a90"/><circle cx="8" cy="8" r="6" fill="#4a94f0"/><path d="M8.5 3.5L13 8H12V13H5V8H4Z" fill="#fff"/></svg>
<div class="t" style="left:28px;top:172.84px;font-size:12px;color:#000;transform:scale(0.9697,1.0000);transform-origin:0 4.16px;">Workspace</div>
<svg class="a" style="left:14px;top:181px;" width="3" height="6" viewBox="0 0 3 6"><path d="M1.5 0V6" stroke="#808080" stroke-dasharray="1 1"/></svg>
<svg class="a" style="left:11px;top:188px;" width="9" height="9" viewBox="0 0 9 9"><rect x="0.5" y="0.5" width="8" height="8" fill="#f4f4f4" stroke="#a0a0a0"/><path d="M2 4.5H7" stroke="#3050a0"/></svg>
<svg class="a" style="left:20px;top:192px;" width="6" height="2" viewBox="0 0 6 2"><path d="M0 0.5H6" stroke="#808080" stroke-dasharray="1 1"/></svg>
<svg class="a" style="left:26px;top:183px;" width="16" height="16" viewBox="0 0 16 16"><rect x="0" y="0" width="8" height="8" fill="#f00000"/><rect x="8" y="0" width="8" height="8" fill="#00d000"/><rect x="0" y="8" width="8" height="8" fill="#f8f000"/><rect x="8" y="8" width="8" height="8" fill="#0028f0"/><rect x="7" y="0" width="1" height="8" fill="#000" opacity="0.5"/></svg>
<div class="t" style="left:47px;top:191.04px;font-size:12px;color:#000;font-weight:700;transform:scale(0.9448,1.0000);transform-origin:0 4.16px;">bai tap 1</div>
<svg class="a" style="left:33px;top:199px;" width="3" height="7" viewBox="0 0 3 7"><path d="M1.5 0V7" stroke="#808080" stroke-dasharray="1 1"/></svg>
<svg class="a" style="left:30px;top:206px;" width="9" height="9" viewBox="0 0 9 9"><rect x="0.5" y="0.5" width="8" height="8" fill="#f4f4f4" stroke="#a0a0a0"/><path d="M2 4.5H7" stroke="#3050a0"/></svg>
<svg class="a" style="left:39px;top:210px;" width="6" height="2" viewBox="0 0 6 2"><path d="M0 0.5H6" stroke="#808080" stroke-dasharray="1 1"/></svg>
<svg class="a" style="left:45px;top:203px;" width="16" height="12" viewBox="0 0 16 12"><path d="M0.5 1.5H5.5L7 3H12.5V11.5H0.5Z" fill="#6fb0f0" stroke="#1048c0"/><path d="M3 5.5H15.5L12.5 11.5H0.5Z" fill="#cfe6ff" stroke="#1048c0"/></svg>
<div class="t" style="left:66px;top:207.84px;font-size:12px;color:#000;transform:scale(0.9312,1.0000);transform-origin:0 4.16px;">Sources</div>
<svg class="a" style="left:52px;top:218px;" width="14" height="11" viewBox="0 0 14 11"><path d="M1.5 0V10.5H14" fill="none" stroke="#808080" stroke-dasharray="1 1"/></svg>
<svg class="a" style="left:66px;top:219px;" width="12" height="16" viewBox="0 0 12 16"><path d="M0.5 0.5H8L11.5 4V15.5H0.5Z" fill="#eeeef4" stroke="#9a9aae"/><path d="M8 0.5V4H11.5" fill="none" stroke="#9a9aae"/></svg>
<div class="a" style="left:83px;top:218px;width:40px;height:18px;background:#ececec"></div>
<div class="t" style="left:85px;top:226.84px;font-size:12px;color:#000;transform:scale(1.0186,1.0000);transform-origin:0 4.16px;">main.c</div>
<div class="a" style="left:201px;top:118px;width:1px;height:587px;background:#a8a8a8"></div>
<div class="a" style="left:202px;top:118px;width:4px;height:587px;background:#e0e0e0"></div>
<div class="a" style="left:206px;top:118px;width:2px;height:587px;background:#b0b0b0"></div>
<div class="a" style="left:208px;top:117px;width:1158px;height:3px;background:#a8a8a8"></div>
<div class="a" style="left:208px;top:120px;width:1158px;height:1px;background:#707070"></div>
<div class="a" style="left:208px;top:120px;width:1px;height:408px;background:#6a6a6a"></div>
<div class="a" style="left:209px;top:121px;width:1px;height:406px;background:#d8d8d8"></div>
<div class="a" style="left:210px;top:121px;width:1152px;height:22px;background:linear-gradient(#cacaca,#f0f0f0)"></div>
<div class="a" style="left:210px;top:143px;width:1152px;height:1px;background:#b8b8b8"></div>
<div class="a" style="left:210px;top:144px;width:1152px;height:2px;background:#e4e4e4"></div>
<div class="a" style="left:210px;top:146px;width:1152px;height:2px;background:linear-gradient(#a8a8a8,#8a8a8a)"></div>
<div class="a" style="left:210px;top:148px;width:1152px;height:1px;background:#707070"></div>
<div class="a" style="left:1362px;top:121px;width:1px;height:406px;background:#a0a0a0"></div>
<div class="a" style="left:1363px;top:121px;width:2px;height:406px;background:#fafafa"></div>
<div class="a" style="left:1365px;top:120px;width:1px;height:408px;background:#b0b0b0"></div>
<div class="a" style="left:215px;top:125px;width:73px;height:19px;background:linear-gradient(#fff,#fff 55%,#ececec);border:1px solid #a0a0a0;border-bottom:none;border-radius:3px 3px 0 0"></div>
<div class="t" style="left:223px;top:134.84px;font-size:12px;color:#000;font-weight:700;">main.c</div>
<svg class="a" style="left:273px;top:130px;" width="9" height="9" viewBox="0 0 9 9"><path d="M0.5 0.5L8.5 8.5M8.5 0.5L0.5 8.5" stroke="#707070" stroke-width="1.2"/></svg>
<div class="a" style="left:209px;top:149px;width:2px;height:377px;background:#b0b0b0"></div>
<div class="a" style="left:211px;top:149px;width:1px;height:376px;background:#707070"></div>
<div class="a" style="left:212px;top:149px;width:1150px;height:360px;background:#fff"></div>
<div class="a" style="left:212px;top:149px;width:70px;height:360px;background:#f0f0f0"></div>
<div class="a" style="left:282px;top:149px;width:4px;height:289px;background:#00e640"></div>
<div class="a" style="left:286px;top:149px;width:16px;height:360px;background:repeating-conic-gradient(#ececec 0 25%,#fff 0 50%) 0 0/2px 2px"></div>
<div class="t" style="left:255px;top:159.45px;font-size:13.33px;color:#222;font-family:'Liberation Mono',monospace;transform:scale(1.0000,0.9500);transform-origin:0 3.55px;">1</div>
<div class="t" style="left:255px;top:176.45px;font-size:13.33px;color:#222;font-family:'Liberation Mono',monospace;transform:scale(1.0000,0.9500);transform-origin:0 3.55px;">2</div>
<div class="t" style="left:255px;top:193.45px;font-size:13.33px;color:#222;font-family:'Liberation Mono',monospace;transform:scale(1.0000,0.9500);transform-origin:0 3.55px;">3</div>
<div class="t" style="left:255px;top:210.45px;font-size:13.33px;color:#222;font-family:'Liberation Mono',monospace;transform:scale(1.0000,0.9500);transform-origin:0 3.55px;">4</div>
<div class="t" style="left:255px;top:227.45px;font-size:13.33px;color:#222;font-family:'Liberation Mono',monospace;transform:scale(1.0000,0.9500);transform-origin:0 3.55px;">5</div>
<div class="t" style="left:255px;top:244.45px;font-size:13.33px;color:#222;font-family:'Liberation Mono',monospace;transform:scale(1.0000,0.9500);transform-origin:0 3.55px;">6</div>
<div class="t" style="left:255px;top:261.45px;font-size:13.33px;color:#222;font-family:'Liberation Mono',monospace;transform:scale(1.0000,0.9500);transform-origin:0 3.55px;">7</div>
<div class="t" style="left:255px;top:278.45px;font-size:13.33px;color:#222;font-family:'Liberation Mono',monospace;transform:scale(1.0000,0.9500);transform-origin:0 3.55px;">8</div>
<div class="t" style="left:255px;top:295.45px;font-size:13.33px;color:#222;font-family:'Liberation Mono',monospace;transform:scale(1.0000,0.9500);transform-origin:0 3.55px;">9</div>
<div class="t" style="left:247px;top:312.45px;font-size:13.33px;color:#222;font-family:'Liberation Mono',monospace;transform:scale(1.0000,0.9500);transform-origin:0 3.55px;">10</div>
<div class="t" style="left:247px;top:329.45px;font-size:13.33px;color:#222;font-family:'Liberation Mono',monospace;transform:scale(1.0000,0.9500);transform-origin:0 3.55px;">11</div>
<div class="t" style="left:247px;top:346.45px;font-size:13.33px;color:#222;font-family:'Liberation Mono',monospace;transform:scale(1.0000,0.9500);transform-origin:0 3.55px;">12</div>
<div class="t" style="left:247px;top:363.45px;font-size:13.33px;color:#222;font-family:'Liberation Mono',monospace;transform:scale(1.0000,0.9500);transform-origin:0 3.55px;">13</div>
<div class="t" style="left:247px;top:380.45px;font-size:13.33px;color:#222;font-family:'Liberation Mono',monospace;transform:scale(1.0000,0.9500);transform-origin:0 3.55px;">14</div>
<div class="t" style="left:247px;top:397.45px;font-size:13.33px;color:#222;font-family:'Liberation Mono',monospace;transform:scale(1.0000,0.9500);transform-origin:0 3.55px;">15</div>
<div class="t" style="left:247px;top:414.45px;font-size:13.33px;color:#222;font-family:'Liberation Mono',monospace;transform:scale(1.0000,0.9500);transform-origin:0 3.55px;">16</div>
<div class="t" style="left:247px;top:431.45px;font-size:13.33px;color:#222;font-family:'Liberation Mono',monospace;transform:scale(1.0000,0.9500);transform-origin:0 3.55px;">17</div>
<div class="t" style="left:247px;top:448.45px;font-size:13.33px;color:#222;font-family:'Liberation Mono',monospace;transform:scale(1.0000,0.9500);transform-origin:0 3.55px;">18</div>
<div class="t" style="left:303px;top:159.45px;font-size:13.33px;color:#000;font-family:'Liberation Mono',monospace;transform:scale(1.0000,0.8700);transform-origin:0 3.55px;"><span style="color:#00a000">#include&lt;math.h&gt;</span></div>
<div class="t" style="left:303px;top:176.45px;font-size:13.33px;color:#000;font-family:'Liberation Mono',monospace;transform:scale(1.0000,0.8700);transform-origin:0 3.55px;"><span style="color:#00a000">#include &lt;stdio.h&gt;</span></div>
<div class="t" style="left:303px;top:193.45px;font-size:13.33px;color:#000;font-family:'Liberation Mono',monospace;transform:scale(1.0000,0.8700);transform-origin:0 3.55px;"><span style="color:#00a000">#include&lt;conio.h&gt;</span></div>
<div class="t" style="left:303px;top:210.45px;font-size:13.33px;color:#000;font-family:'Liberation Mono',monospace;transform:scale(1.0000,0.8700);transform-origin:0 3.55px;"><span style="color:#00a000">#define PI 3,14</span></div>
<div class="t" style="left:303px;top:244.45px;font-size:13.33px;color:#000;font-family:'Liberation Mono',monospace;transform:scale(1.0000,0.8700);transform-origin:0 3.55px;"><span style="color:#0000a8;font-weight:bold">int</span><span style="color:#000000"> main</span><span style="color:#ff0000">()</span></div>
<div class="t" style="left:303px;top:261.45px;font-size:13.33px;color:#000;font-family:'Liberation Mono',monospace;transform:scale(1.0000,0.8700);transform-origin:0 3.55px;"><span style="color:#ff0000">{</span><span style="color:#000000">   </span><span style="color:#0000a8;font-weight:bold">int</span><span style="color:#000000"> r</span><span style="color:#ff0000">;</span></div>
<div class="t" style="left:303px;top:278.45px;font-size:13.33px;color:#000;font-family:'Liberation Mono',monospace;transform:scale(1.0000,0.8700);transform-origin:0 3.55px;"><span style="color:#000000">    </span><span style="color:#0000a8;font-weight:bold">float</span><span style="color:#000000"> s</span><span style="color:#ff0000">,</span><span style="color:#000000">v</span><span style="color:#ff0000">=</span><span style="color:#ff00ff">0</span><span style="color:#ff0000">;</span></div>
<div class="t" style="left:303px;top:295.45px;font-size:13.33px;color:#000;font-family:'Liberation Mono',monospace;transform:scale(1.0000,0.8700);transform-origin:0 3.55px;"><span style="color:#000000">    printf</span><span style="color:#ff0000">(</span><span style="color:#0000ff">&quot;nhap vao ban kinh : &quot;</span><span style="color:#ff0000">)</span><span style="color:#ff0000">;</span></div>
<div class="t" style="left:303px;top:312.45px;font-size:13.33px;color:#000;font-family:'Liberation Mono',monospace;transform:scale(1.0000,0.8700);transform-origin:0 3.55px;"><span style="color:#000000">    scanf</span><span style="color:#ff0000">(</span><span style="color:#0000ff">&quot;%d&quot;</span><span style="color:#ff0000">,&amp;</span><span style="color:#000000">r</span><span style="color:#ff0000">);</span></div>
<div class="t" style="left:303px;top:329.45px;font-size:13.33px;color:#000;font-family:'Liberation Mono',monospace;transform:scale(1.0000,0.8700);transform-origin:0 3.55px;"><span style="color:#000000">    s</span><span style="color:#ff0000">=</span><span style="color:#ff00ff">4</span><span style="color:#ff0000">*</span><span style="color:#000000">r</span><span style="color:#ff0000">*</span><span style="color:#000000">r</span><span style="color:#ff0000">*</span><span style="color:#000000">PI</span><span style="color:#ff0000">;</span></div>
<div class="t" style="left:303px;top:346.45px;font-size:13.33px;color:#000;font-family:'Liberation Mono',monospace;transform:scale(1.0000,0.8700);transform-origin:0 3.55px;"><span style="color:#000000">    v</span><span style="color:#ff0000">=(</span><span style="color:#ff00ff">4</span><span style="color:#ff0000">/</span><span style="color:#ff00ff">3</span><span style="color:#ff0000">)*</span><span style="color:#000000">r</span><span style="color:#ff0000">*</span><span style="color:#000000">r</span><span style="color:#ff0000">*</span><span style="color:#000000">r</span><span style="color:#ff0000">*</span><span style="color:#000000">PI</span><span style="color:#ff0000">;</span></div>
<div class="t" style="left:303px;top:363.45px;font-size:13.33px;color:#000;font-family:'Liberation Mono',monospace;transform:scale(1.0000,0.8700);transform-origin:0 3.55px;"><span style="color:#000000">    printf</span><span style="color:#ff0000">(</span><span style="color:#0000ff">&quot;dien tich %6.2f&quot;</span><span style="color:#ff0000">,</span><span style="color:#000000">s</span><span style="color:#ff0000">);</span></div>
<div class="t" style="left:303px;top:380.45px;font-size:13.33px;color:#000;font-family:'Liberation Mono',monospace;transform:scale(1.0000,0.8700);transform-origin:0 3.55px;"><span style="color:#000000">    printf</span><span style="color:#ff0000">(</span><span style="color:#0000ff">&quot;the tich %6.2f&quot;</span><span style="color:#ff0000">,</span><span style="color:#000000">v</span><span style="color:#ff0000">);</span></div>
<div class="t" style="left:303px;top:397.45px;font-size:13.33px;color:#000;font-family:'Liberation Mono',monospace;transform:scale(1.0000,0.8700);transform-origin:0 3.55px;"><span style="color:#000000">    getch</span><span style="color:#ff0000">();</span></div>
<div class="t" style="left:303px;top:414.45px;font-size:13.33px;color:#000;font-family:'Liberation Mono',monospace;transform:scale(1.0000,0.8700);transform-origin:0 3.55px;"><span style="color:#ff0000">}</span></div>
<svg class="a" style="left:399px;top:299px;" width="32" height="3" viewBox="0 0 32 3"><path d="M0 1L1 0L3 2L5 0L7 2L9 0L11 2L13 0L15 2L17 0L19 2L21 0L23 2L25 0L27 2L29 0L31 2" fill="none" stroke="#ff0000" stroke-width="0.9"/></svg>
<svg class="a" style="left:439px;top:299px;" width="24" height="3" viewBox="0 0 24 3"><path d="M0 1L1 0L3 2L5 0L7 2L9 0L11 2L13 0L15 2L17 0L19 2L21 0L23 2" fill="none" stroke="#ff0000" stroke-width="0.9"/></svg>
<svg class="a" style="left:503px;top:299px;" width="32" height="3" viewBox="0 0 32 3"><path d="M0 1L1 0L3 2L5 0L7 2L9 0L11 2L13 0L15 2L17 0L19 2L21 0L23 2L25 0L27 2L29 0L31 2" fill="none" stroke="#ff0000" stroke-width="0.9"/></svg>
<svg class="a" style="left:399px;top:367px;" width="32" height="3" viewBox="0 0 32 3"><path d="M0 1L1 0L3 2L5 0L7 2L9 0L11 2L13 0L15 2L17 0L19 2L21 0L23 2L25 0L27 2L29 0L31 2" fill="none" stroke="#ff0000" stroke-width="0.9"/></svg>
<svg class="a" style="left:439px;top:367px;" width="32" height="3" viewBox="0 0 32 3"><path d="M0 1L1 0L3 2L5 0L7 2L9 0L11 2L13 0L15 2L17 0L19 2L21 0L23 2L25 0L27 2L29 0L31 2" fill="none" stroke="#ff0000" stroke-width="0.9"/></svg>
<svg class="a" style="left:431px;top:384px;" width="32" height="3" viewBox="0 0 32 3"><path d="M0 1L1 0L3 2L5 0L7 2L9 0L11 2L13 0L15 2L17 0L19 2L21 0L23 2L25 0L27 2L29 0L31 2" fill="none" stroke="#ff0000" stroke-width="0.9"/></svg>
<svg class="a" style="left:288px;top:253px;" width="13" height="13" viewBox="0 0 13 13"><rect x="0.5" y="0.5" width="12" height="12" fill="#fff" stroke="#808080"/><path d="M2 6.5H11" stroke="#808080"/></svg>
<div class="a" style="left:294px;top:266px;width:1px;height:147px;background:#808080"></div>
<div class="a" style="left:294px;top:412px;width:7px;height:1px;background:#808080"></div>
<div class="a" style="left:212px;top:509px;width:1150px;height:1px;background:#fff"></div>
<div class="a" style="left:212px;top:510px;width:1150px;height:15px;background:#f0f0f0"></div>
<div class="a" style="left:229px;top:510px;width:1133px;height:15px;background:#cdcdcd"></div>
<svg class="a" style="left:217px;top:513px;" width="6" height="9" viewBox="0 0 6 9"><path d="M5 0.5L1 4.5L5 8.5" fill="none" stroke="#404040" stroke-width="1.8"/></svg>
<div class="a" style="left:210px;top:525px;width:1152px;height:1px;background:#f0f0f0"></div>
<div class="a" style="left:209px;top:526px;width:1157px;height:1px;background:#fff"></div>
<div class="a" style="left:208px;top:527px;width:1158px;height:1px;background:#fafafa"></div>
<div class="a" style="left:208px;top:528px;width:1158px;height:1px;background:#a0a0a0"></div>
<div class="a" style="left:206px;top:529px;width:1160px;height:2px;background:#fff"></div>
<div class="a" style="left:206px;top:531px;width:1160px;height:1px;background:#a0a0a0"></div>
<div class="a" style="left:202px;top:532px;width:1164px;height:4px;background:#dcdcdc"></div>
<div class="a" style="left:206px;top:536px;width:1160px;height:1px;background:#a0a0a0"></div>
<div class="a" style="left:206px;top:537px;width:1160px;height:17px;background:linear-gradient(#bdbdbd,#d3d3d3)"></div>
<div class="a" style="left:206px;top:554px;width:1160px;height:1px;background:#a0a0a0"></div>
<div class="t" style="left:209px;top:545.19px;font-size:11px;color:#000;transform:scale(0.9724,1.0000);transform-origin:0 3.81px;">Logs &amp; others</div>
<div class="a" style="left:208px;top:555px;width:1158px;height:150px;background:#fff;border-left:1px solid #6a6a6a;border-top:1px solid #707070"></div>
<div class="a" style="left:209px;top:556px;width:1px;height:30px;background:#d8d8d8"></div>
<div class="a" style="left:210px;top:556px;width:1156px;height:25px;background:linear-gradient(#d6d6d6,#f0f0f0)"></div>
<div class="a" style="left:210px;top:581px;width:1156px;height:1px;background:#a8a8a8"></div>
<div class="a" style="left:210px;top:582px;width:1156px;height:2px;background:#e8e8e8"></div>
<div class="a" style="left:210px;top:584px;width:1156px;height:2px;background:#a0a0a0"></div>
<div class="a" style="left:210px;top:700px;width:1156px;height:1px;background:#b8b8b8"></div>
<div class="a" style="left:208px;top:701px;width:1158px;height:1px;background:#a0a0a0"></div>
<div class="a" style="left:208px;top:702px;width:1158px;height:2px;background:#fff"></div>
<div class="a" style="left:202px;top:704px;width:1164px;height:1px;background:#a8a8a8"></div>
<svg class="a" style="left:214px;top:566px;" width="6" height="10" viewBox="0 0 6 10"><path d="M5.5 0V10L0 5Z" fill="#808080"/></svg>
<div class="a" style="left:226px;top:560px;width:124px;height:21px;background:linear-gradient(#ececec 0,#ececec 50%,#dcdcdc 50%,#dcdcdc 100%);border:1px solid #c0c0c0;border-bottom:none;border-radius:3px 3px 0 0"></div>
<svg class="a" style="left:233px;top:563px;" width="16" height="17" viewBox="0 0 16 17"><path d="M1.5 2.5H10V16.5H1.5Z" fill="#f4f4f4" stroke="#a0a0a0"/><path d="M4 14L12 1L15 3L7 15L4 16Z" fill="#f0a020" stroke="#a05000" stroke-width="0.8"/></svg>
<div class="t" style="left:252px;top:571.34px;font-size:12px;color:#000;transform:scale(0.8769,1.0000);transform-origin:0 4.16px;">Code::Blocks</div>
<svg class="a" style="left:336px;top:566px;" width="9" height="9" viewBox="0 0 9 9"><path d="M0.5 0.5L8.5 8.5M8.5 0.5L0.5 8.5" stroke="#606060" stroke-width="1.2"/></svg>
<div class="a" style="left:351px;top:560px;width:135px;height:21px;background:linear-gradient(#ececec 0,#ececec 50%,#dcdcdc 50%,#dcdcdc 100%);border:1px solid #c0c0c0;border-bottom:none;border-radius:3px 3px 0 0"></div>
<svg class="a" style="left:358px;top:563px;" width="17" height="17" viewBox="0 0 17 17"><circle cx="7" cy="7" r="6" fill="#bfe2fb" stroke="#3d79b0" stroke-width="1.2"/><path d="M11 11L16 16" stroke="#c8a000" stroke-width="3"/></svg>
<div class="t" style="left:377px;top:571.34px;font-size:12px;color:#000;transform:scale(0.9126,1.0000);transform-origin:0 4.16px;">Search results</div>
<svg class="a" style="left:472px;top:566px;" width="9" height="9" viewBox="0 0 9 9"><path d="M0.5 0.5L8.5 8.5M8.5 0.5L0.5 8.5" stroke="#606060" stroke-width="1.2"/></svg>
<div class="a" style="left:486px;top:560px;width:78px;height:21px;background:linear-gradient(#ececec 0,#ececec 50%,#dcdcdc 50%,#dcdcdc 100%);border:1px solid #c0c0c0;border-bottom:none;border-radius:3px 3px 0 0"></div>
<svg class="a" style="left:493px;top:563px;" width="16" height="17" viewBox="0 0 16 17"><path d="M1.5 2.5H10V16.5H1.5Z" fill="#f4f4f4" stroke="#a0a0a0"/><path d="M4 14L12 1L15 3L7 15L4 16Z" fill="#f0a020" stroke="#a05000" stroke-width="0.8"/></svg>
<div class="t" style="left:512px;top:571.34px;font-size:12px;color:#000;transform:scale(0.8623,1.0000);transform-origin:0 4.16px;">Cccc</div>
<svg class="a" style="left:550px;top:566px;" width="9" height="9" viewBox="0 0 9 9"><path d="M0.5 0.5L8.5 8.5M8.5 0.5L0.5 8.5" stroke="#606060" stroke-width="1.2"/></svg>
<div class="a" style="left:564px;top:559px;width:60px;height:27px;background:linear-gradient(#fff,#fff 55%,#ececec);border:1px solid #a0a0a0;border-bottom:none;border-radius:3px 3px 0 0"></div>
<svg class="a" style="left:572px;top:563px;" width="17" height="17" viewBox="0 0 17 17"><circle cx="8.5" cy="8.5" r="6" fill="none" stroke="#1e78d8" stroke-width="4" stroke-dasharray="2.5 2"/><circle cx="8.5" cy="8.5" r="5" fill="none" stroke="#1e78d8" stroke-width="2.6"/></svg>
<div class="t" style="left:590px;top:571.34px;font-size:12px;color:#000;font-weight:700;transform:scale(0.9741,1.0000);transform-origin:0 4.16px;">Build log</div>
<div class="a" style="left:210px;top:586px;width:1156px;height:114px;background:#fff"></div>
<div class="a" style="left:209px;top:586px;width:2px;height:115px;background:#a8a8b0"></div>
<div class="t" style="left:213px;top:594.89px;font-size:11.67px;color:#000;font-family:'Liberation Mono',monospace;transform:scale(1.0000,0.8700);transform-origin:0 3.11px;">Nothing to be done (all items are up-to-date).</div>
<div class="t" style="left:213px;top:636.89px;font-size:11.67px;color:#000;font-weight:700;font-family:'Liberation Mono',monospace;transform:scale(1.0000,0.8700);transform-origin:0 3.11px;">-------------- Run: Debug in bai tap 1 (compiler: GNU GCC Compiler)</div>
<div class="t" style="left:213px;top:656.89px;font-size:11.67px;color:#000;font-family:'Liberation Mono',monospace;transform:scale(1.0000,0.8700);transform-origin:0 3.11px;">Checking for existence: C:\Ngon Ngu C\bai tap 1\bin\Debug\bai tap 1.exe</div>
<div class="t" style="left:213px;top:670.89px;font-size:11.67px;color:#000;font-family:'Liberation Mono',monospace;transform:scale(1.0000,0.8700);transform-origin:0 3.11px;">Executing: &quot;C:\Program Files (x86)\CodeBlocks/cb_console_runner.exe&quot;</div>
<div class="a" style="left:0px;top:705px;width:1366px;height:22px;background:#efefef"></div>
<div class="a" style="left:0px;top:727px;width:1366px;height:1px;background:#fff"></div>
<div class="t" style="left:2px;top:717.84px;font-size:12px;color:#000;transform:scale(1.0211,1.0000);transform-origin:0 4.16px;">C:\Ngon Ngu C\bai tap 1\main.c</div>
<div class="a" style="left:560px;top:707px;width:1px;height:20px;background:#c8c8c8"></div>
<div class="a" style="left:685px;top:707px;width:1px;height:20px;background:#c8c8c8"></div>
<div class="a" style="left:802px;top:707px;width:1px;height:20px;background:#c8c8c8"></div>
<div class="a" style="left:969px;top:707px;width:1px;height:20px;background:#c8c8c8"></div>
<div class="a" style="left:1042px;top:707px;width:1px;height:20px;background:#c8c8c8"></div>
<div class="a" style="left:1108px;top:707px;width:1px;height:20px;background:#c8c8c8"></div>
<div class="a" style="left:1190px;top:707px;width:1px;height:20px;background:#c8c8c8"></div>
<div class="a" style="left:1305px;top:707px;width:1px;height:20px;background:#c8c8c8"></div>
<div class="t" style="left:565px;top:717.84px;font-size:12px;color:#000;transform:scale(0.9557,1.0000);transform-origin:0 4.16px;">Windows (CR+LF)</div>
<div class="t" style="left:690px;top:717.84px;font-size:12px;color:#000;transform:scale(0.9413,1.0000);transform-origin:0 4.16px;">WINDOWS-1252</div>
<div class="t" style="left:807px;top:717.84px;font-size:12px;color:#000;transform:scale(0.9753,1.0000);transform-origin:0 4.16px;">Line 8, Column 16</div>
<div class="t" style="left:974px;top:717.84px;font-size:12px;color:#000;transform:scale(0.9662,1.0000);transform-origin:0 4.16px;">Insert</div>
<div class="t" style="left:1112px;top:717.84px;font-size:12px;color:#000;transform:scale(0.9864,1.0000);transform-origin:0 4.16px;">Read/Write</div>
<div class="t" style="left:1195px;top:717.84px;font-size:12px;color:#000;">default</div>
<svg class="a" style="left:1327px;top:712px;" width="16" height="11" viewBox="0 0 16 11"><rect x="0" y="0" width="16" height="1" fill="#d03030"/><rect x="0" y="1" width="16" height="1" fill="#fff"/><rect x="0" y="2" width="16" height="1" fill="#d03030"/><rect x="0" y="3" width="16" height="1" fill="#fff"/><rect x="0" y="4" width="16" height="1" fill="#d03030"/><rect x="0" y="5" width="16" height="1" fill="#fff"/><rect x="0" y="6" width="16" height="1" fill="#d03030"/><rect x="0" y="7" width="16" height="1" fill="#fff"/><rect x="0" y="8" width="16" height="1" fill="#d03030"/><rect x="0" y="9" width="16" height="1" fill="#fff"/><rect x="0" y="10" width="16" height="1" fill="#d03030"/><rect x="0" y="0" width="7" height="6" fill="#3050a0"/></svg>
<div class="a" style="left:616px;top:194px;width:760px;height:512px;box-shadow:0 2px 14px 3px rgba(0,0,0,0.17)"></div>
<div class="a" style="left:616px;top:194px;width:750px;height:512px;background:#000;border-left:1px solid #2b7fcf;border-top:1px solid #2b7fcf;border-bottom:1px solid #2b7fcf"></div>
<div class="a" style="left:617px;top:195px;width:749px;height:30px;background:#fff"></div>
<svg class="a" style="left:625px;top:202px;" width="16" height="14" viewBox="0 0 16 14"><defs><linearGradient id="gcon2" x1="0" y1="0" x2="0.3" y2="1"><stop offset="0" stop-color="#3a6ab0"/><stop offset="1" stop-color="#50b060"/></linearGradient></defs><rect x="0.5" y="0.5" width="15" height="13" fill="#f0f0f0" stroke="#909090"/><rect x="2" y="3" width="5" height="8.5" fill="url(#gcon2)"/><path d="M9 4H12M9 6.5H12M9 9H12" stroke="#d0d0d0"/><rect x="13" y="3" width="1" height="4" fill="#40a050"/></svg>
<div class="t" style="left:646px;top:209.84px;font-size:12px;color:#000;transform:scale(1.0172,1.0000);transform-origin:0 4.16px;">&quot;C:\Ngon Ngu C\bai tap 1\bin\Debug\bai tap 1.exe&quot;</div>
<div class="t" style="left:617px;top:235.45px;font-size:13.33px;color:#c0c0c0;font-family:'Liberation Mono',monospace;">nhap vao ban kinh : 2</div>
<div class="t" style="left:617px;top:251.45px;font-size:13.33px;color:#c0c0c0;font-family:'Liberation Mono',monospace;">dien tich  48.00the tich  24.00</div>
<div class="t" style="left:617px;top:267.45px;font-size:13.33px;color:#c0c0c0;font-family:'Liberation Mono',monospace;">Process returned 0 (0x0)   execution time : 8.994 s</div>
<div class="t" style="left:617px;top:283.45px;font-size:13.33px;color:#c0c0c0;font-family:'Liberation Mono',monospace;">Press any key to continue.</div>
<div class="a" style="left:0px;top:728px;width:1366px;height:40px;background:#000"></div>
<svg class="a" style="left:16px;top:740px;" width="16" height="16" viewBox="0 0 16 16"><path d="M0 2L7 1V7H0Z M8 0.9L16 0V7H8Z M0 8H7V15L0 14Z M8 8H16V16L8 15.1Z" fill="#fff" shape-rendering="crispEdges"/></svg>
<svg class="a" style="left:64px;top:740px;" width="16" height="16" viewBox="0 0 16 16"><circle cx="8" cy="8" r="7" fill="none" stroke="#fff" stroke-width="1.6"/></svg>
<svg class="a" style="left:110px;top:741px;" width="21" height="15" viewBox="0 0 21 15"><rect x="4.5" y="0.5" width="12" height="14" fill="none" stroke="#fff" stroke-width="1.2"/><path d="M2.5 2.5H0.5V12.5H2.5M18.5 2.5H20.5V12.5H18.5" fill="none" stroke="#fff"/></svg>
<svg class="a" style="left:159px;top:738px;" width="24" height="19" viewBox="0 0 24 19"><rect x="0" y="3" width="24" height="16" fill="#fff"/><path d="M7 3L9 0H15L17 3Z" fill="#fff"/><circle cx="12" cy="11" r="5" fill="#000"/><circle cx="13" cy="10" r="3.5" fill="#fff"/><circle cx="12.5" cy="10.5" r="3" fill="#000"/><rect x="19" y="5" width="2" height="2" fill="#000"/></svg>
<svg class="a" style="left:208px;top:736px;" width="24" height="23" viewBox="0 0 24 23"><rect x="0" y="0" width="24" height="23" fill="#1e4ea8"/><rect x="0" y="0" width="24" height="23" fill="none" stroke="#5a80c8"/><text x="2" y="10" font-family="Liberation Sans" font-weight="bold" font-size="9" fill="#fff">DEV</text><text x="1" y="20" font-family="Liberation Sans" font-weight="bold" font-size="10" fill="#2ac8f8">C++</text></svg>
<svg class="a" style="left:259px;top:736px;" width="22" height="23" viewBox="0 0 22 23"><path d="M1 2L10 1V11L2 12Z" fill="#d42a1f"/><path d="M11 1L21 2L20 11H11Z" fill="#3fb83a"/><path d="M2 13L10 12V22L3 23Z" fill="#d8cf2a"/><path d="M11 12H20L19 21L11 22Z" fill="#5a2fc8"/></svg>
<svg class="a" style="left:305px;top:736px;" width="25" height="25" viewBox="0 0 25 25"><circle cx="12.5" cy="13" r="11.5" fill="#6ab04c" stroke="#fff" stroke-width="1"/><path d="M12.5 13L15 -1H26V8Z" fill="#000"/><circle cx="12.5" cy="13" r="5" fill="none" stroke="#fff" stroke-width="2.4"/><circle cx="12.5" cy="13" r="2.6" fill="#6ab04c"/><path d="M12.5 13L15.5 3M12.5 13L18.5 5M12.5 13L21 9" stroke="#6ab04c" stroke-width="0"/><path d="M14.5 2.5L14 7M18.5 3.5L16.5 8M22 7.5L18 10" stroke="#f26a1b" stroke-width="2"/></svg>
<svg class="a" style="left:355px;top:736px;" width="23" height="23" viewBox="0 0 23 23"><rect x="9" y="2" width="14" height="19" fill="#fff"/><path d="M11 5H21M11 9H21M11 13H21M11 17H21M16 3V20" stroke="#1d7044" stroke-width="1"/><path d="M0 2.5L13 0V23L0 20.5Z" fill="#1d7044"/><path d="M3 7L9 16M9 7L3 16" stroke="#fff" stroke-width="2.2"/></svg>
<svg class="a" style="left:405px;top:737px;" width="22" height="22" viewBox="0 0 22 22"><path d="M1 12C1 5 6 1 12 1C18 1 21 5 21 11V13H7C7 17 11 19 15 19C17 19 19 18 20 17V21C18 22 16 22 13 22C6 22 1 18 1 12Z M7 9H15C15 6 13 5 11 5C9 5 7 7 7 9Z" fill="#1a78d8"/></svg>
<div class="a" style="left:441px;top:728px;width:48px;height:40px;background:#333"></div>
<svg class="a" style="left:453px;top:738px;" width="22" height="19" viewBox="0 0 22 19"><defs><linearGradient id="gcon" x1="0" y1="0" x2="0.3" y2="1"><stop offset="0" stop-color="#3a6ab0"/><stop offset="1" stop-color="#50b060"/></linearGradient><linearGradient id="gbar" x1="0" y1="0" x2="0" y2="1"><stop offset="0" stop-color="#2a5aa8"/><stop offset="1" stop-color="#60c060"/></linearGradient></defs><rect x="0" y="0" width="22" height="19" fill="#f4f4f4"/><rect x="0" y="0" width="22" height="2" fill="#e4e4e4"/><rect x="2" y="4" width="8.5" height="12" fill="url(#gcon)" stroke="#8080a0" stroke-width="0.5"/><path d="M13 5H16M13 8H16M13 11H16M13 14.5H16" stroke="#cfcfcf" stroke-width="1.4"/><rect x="18.5" y="4" width="1.5" height="7" fill="url(#gbar)"/></svg>
<div class="a" style="left:249px;top:766px;width:40px;height:2px;background:#76b9ed"></div>
<div class="a" style="left:298px;top:766px;width:40px;height:2px;background:#76b9ed"></div>
<div class="a" style="left:396px;top:766px;width:40px;height:2px;background:#76b9ed"></div>
<div class="a" style="left:441px;top:766px;width:48px;height:2px;background:#76b9ed"></div>
<svg class="a" style="left:1093px;top:744px;" width="13" height="8" viewBox="0 0 13 8"><path d="M0.5 7L6.5 1L12.5 7" fill="none" stroke="#fff" stroke-width="1.2"/></svg>
<svg class="a" style="left:1117px;top:742px;" width="14" height="14" viewBox="0 0 14 14"><path d="M1 13A12 12 0 0 1 13 1M4 13A9 9 0 0 1 13 4M7 13A6 6 0 0 1 13 7" fill="none" stroke="#fff" stroke-width="1.1"/><circle cx="12" cy="12" r="1.6" fill="#fff"/></svg>
<svg class="a" style="left:1139px;top:741px;" width="16" height="15" viewBox="0 0 16 15"><rect x="0" y="0" width="16" height="15" fill="#f2c8c8"/><rect x="0.5" y="0.5" width="15" height="14" fill="none" stroke="#d09090"/><path d="M3.5 2.5L8 12.5L12.5 2.5" fill="none" stroke="#c01818" stroke-width="2"/></svg>
<svg class="a" style="left:1164px;top:745px;" width="16" height="8" viewBox="0 0 16 8"><rect x="0.5" y="0.5" width="13" height="7" fill="none" stroke="#fff"/><rect x="2" y="2" width="6" height="4" fill="#fff"/><rect x="14" y="2.5" width="2" height="3" fill="#fff"/></svg>
<svg class="a" style="left:1187px;top:742px;" width="17" height="14" viewBox="0 0 17 14"><path d="M0.5 4.5H3.5L7.5 0.5V13.5L3.5 9.5H0.5Z" fill="none" stroke="#fff"/><path d="M10 4.5A3 3 0 0 1 10 9.5M12 2.5A6 6 0 0 1 12 11.5M14 1A8 8 0 0 1 14 13" fill="none" stroke="#fff" stroke-width="0.9"/></svg>
<div class="t" style="left:1213px;top:747.34px;font-size:12px;color:#fff;transform:scale(0.8841,1.0000);transform-origin:0 4.16px;">ENG</div>
<div class="t" style="left:1254px;top:738.84px;font-size:12px;color:#fff;transform:scale(0.9409,1.0000);transform-origin:0 4.16px;">11:21 PM</div>
<div class="t" style="left:1250px;top:756.84px;font-size:12px;color:#fff;transform:scale(0.9490,1.0000);transform-origin:0 4.16px;">10/03/2017</div>
<svg class="a" style="left:1325px;top:740px;" width="16" height="16" viewBox="0 0 16 16"><path d="M0.5 0.5H15.5V12.5H10L8 15L6 12.5H0.5Z" fill="none" stroke="#fff" stroke-width="1.1"/></svg>
<div class="a" style="left:1361px;top:728px;width:1px;height:40px;background:#555"></div>
</body></html>
